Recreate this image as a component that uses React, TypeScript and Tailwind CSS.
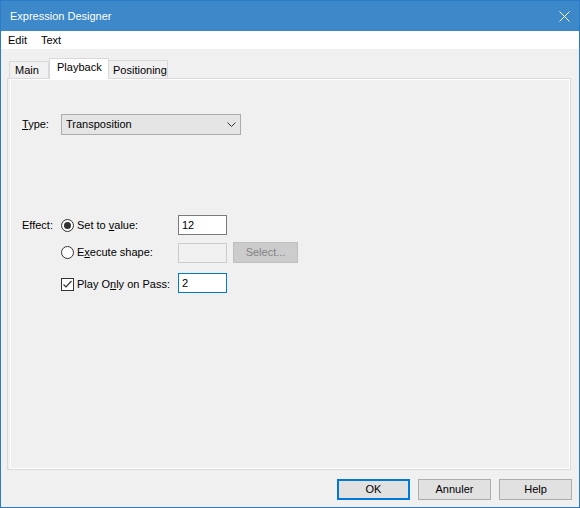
import { ReactNode } from 'react'

function Radio({ checked }: { checked?: boolean }) {
  return (
    <div className="w-[13px] h-[13px] rounded-full border border-[#333333] bg-white flex items-center justify-center shrink-0">
      {checked && <div className="w-[7px] h-[7px] rounded-full bg-[#333333]" />}
    </div>
  )
}

function Checkbox() {
  return (
    <div className="w-[13px] h-[13px] border border-[#333333] bg-white flex items-center justify-center shrink-0">
      <svg width="11" height="11" viewBox="0 0 11 11">
        <path d="M1.5 5.5 L4 8 L9.5 2" fill="none" stroke="#333333" strokeWidth="1.2" />
      </svg>
    </div>
  )
}

function Button({ children, primary }: { children: ReactNode; primary?: boolean }) {
  return (
    <div
      className={
        primary
          ? 'w-[73px] h-[21px] bg-[#e1e1e1] border-2 border-[#0078d7] flex items-center justify-center'
          : 'w-[73px] h-[21px] bg-[#e1e1e1] border border-[#adadad] flex items-center justify-center'
      }
    >
      {children}
    </div>
  )
}

export default function App() {
  return (
    <div className="w-[580px] h-[508px] flex flex-col bg-[#f0f0f0] border border-[#2a7cc9] font-['Liberation_Sans',Arial,sans-serif] text-[11px] text-black overflow-hidden">
      {/* Title bar */}
      <div className="h-[30px] bg-[#3c88c8] flex items-center justify-between pl-[9px] pr-[9px] text-white text-[11px] shrink-0">
        <span>Expression Designer</span>
        <svg width="11" height="11" viewBox="0 0 11 11">
          <path d="M0.5 0.5 L10.5 10.5 M10.5 0.5 L0.5 10.5" stroke="white" strokeWidth="1" />
        </svg>
      </div>

      {/* Menu */}
      <div className="h-[18px] bg-white flex items-center pl-[7px] gap-[14px] text-[11px] shrink-0">
        <span>Edit</span>
        <span>Text</span>
      </div>

      {/* Tabs */}
      <div className="flex items-end h-[21px] mt-[9px] pl-[8px] -mb-[1px] relative z-10 shrink-0">
        <div className="w-[40px] h-[17px] mb-[1px] border-l border-t border-r border-[#d9d9d9] bg-[#f0f0f0] flex items-center pl-[5px] pt-[1px]">
          Main
        </div>
        <div className="w-[60px] h-[21px] border-l border-t border-r border-[#d9d9d9] bg-white flex items-center pl-[7px] pb-[3px] relative z-10">
          Playback
        </div>
        <div className="w-[60px] h-[18px] mb-[1px] -ml-[1px] border-l border-t border-r border-[#d9d9d9] bg-[#f0f0f0] flex items-center pl-[4px] pt-[1px]">
          Positioning
        </div>
      </div>

      {/* Panel */}
      <div className="ml-[6px] mr-[8px] h-[392px] border border-[#d9d9d9] flex shrink-0">
        <div className="flex-1 ml-[2px] border border-white flex flex-col pl-[11px]">
          {/* Type */}
          <div className="flex items-center mt-[34px] h-[21px]">
            <div className="w-[39px]">
              <span className="underline">T</span>ype:
            </div>
            <div className="w-[180px] h-[21px] bg-[#e5e5e5] border border-[#adadad] flex items-center justify-between pl-[4px] pr-[4px]">
              <span>Transposition</span>
              <svg width="9" height="5" viewBox="0 0 9 5">
                <path d="M0.5 0.5 L4.5 4.5 L8.5 0.5" fill="none" stroke="#333333" strokeWidth="1" />
              </svg>
            </div>
          </div>

          {/* Effect */}
          <div className="flex items-center mt-[80px] h-[20px]">
            <div className="w-[39px]">Effect:</div>
            <div className="w-[117px] flex items-center gap-[3px]">
              <Radio checked />
              <span>
                Set to <span className="underline">v</span>alue:
              </span>
            </div>
            <div className="w-[49px] h-[20px] bg-white border border-[#7a7a7a] flex items-center pl-[3px]">12</div>
          </div>

          <div className="flex items-center mt-[7px] h-[21px]">
            <div className="w-[39px]" />
            <div className="w-[117px] flex items-center gap-[3px]">
              <Radio />
              <span>
                E<span className="underline">x</span>ecute shape:
              </span>
            </div>
            <div className="w-[49px] h-[20px] bg-[#f0f0f0] border border-[#cccccc]" />
            <div className="w-[65px] h-[21px] ml-[6px] bg-[#cccccc] border border-[#bfbfbf] flex items-center justify-center text-[#838383]">
              Select...
            </div>
          </div>

          <div className="flex items-center mt-[10px] h-[20px]">
            <div className="w-[39px]" />
            <div className="w-[117px] flex items-center gap-[3px] pt-[3px]">
              <Checkbox />
              <span>
                Play O<span className="underline">n</span>ly on Pass:
              </span>
            </div>
            <div className="w-[49px] h-[20px] bg-white border border-[#0078d7] flex items-center pl-[3px]">2</div>
          </div>
        </div>
      </div>

      {/* Buttons */}
      <div className="flex justify-end gap-[8px] mt-[9px] pr-[7px]">
        <Button primary>OK</Button>
        <Button>Annuler</Button>
        <Button>Help</Button>
      </div>
    </div>
  )
}
